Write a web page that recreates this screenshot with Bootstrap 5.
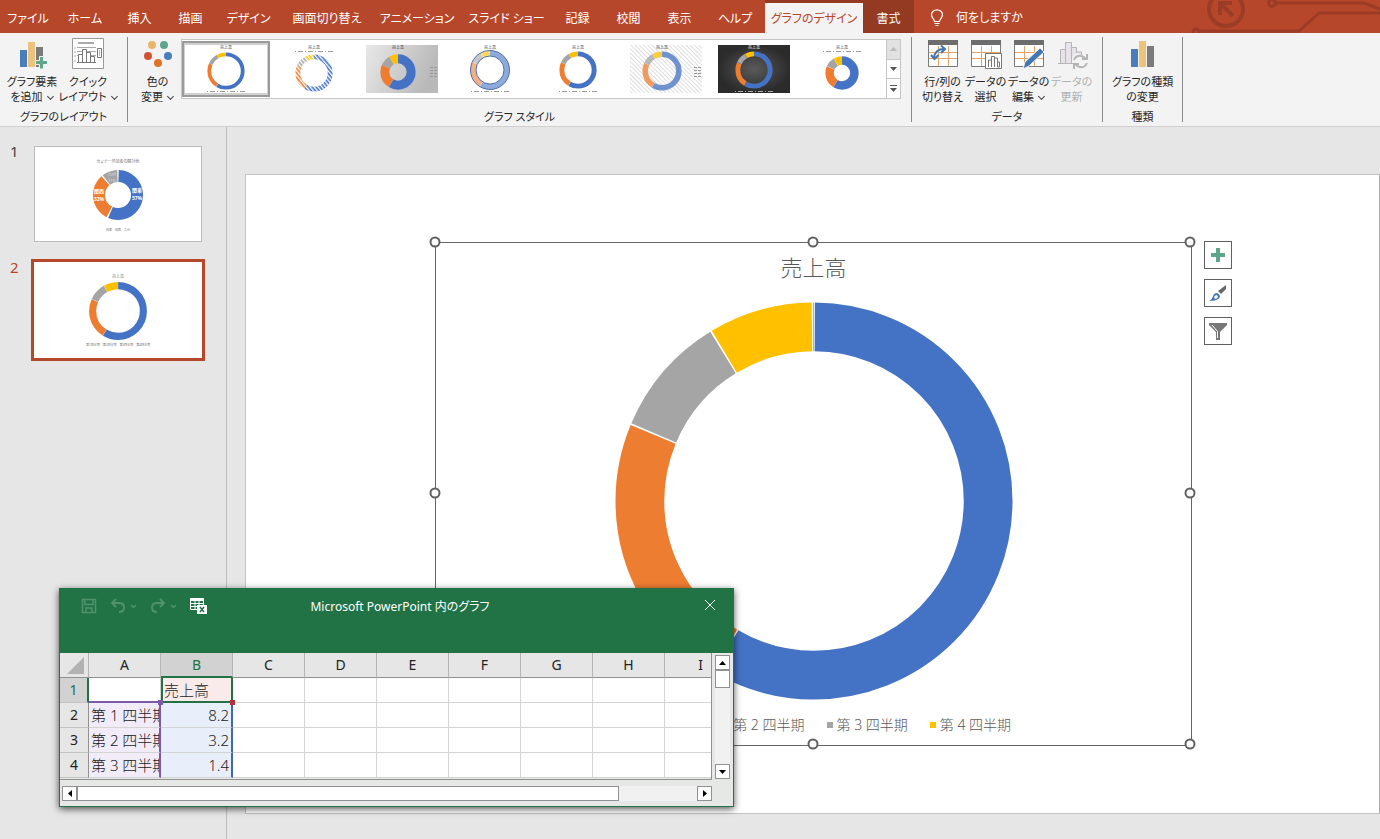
<!DOCTYPE html>
<html lang="ja">
<head>
<meta charset="utf-8">
<meta name="viewport" content="width=device-width, initial-scale=1">
<title>グラフのデザイン</title>
<link href="https://cdn.jsdelivr.net/npm/bootstrap@5.3.0/dist/css/bootstrap.min.css" rel="stylesheet">
<style>
:root{--brand:#b7472a;--excel:#217346;--ui:#f3f3f3;--canvas:#e6e6e6;--c1:#4472c4;--c2:#ed7d31;--c3:#a5a5a5;--c4:#ffc000}
body{font-family:"Noto Sans","Noto Sans CJK JP",sans-serif;font-size:12px;line-height:15px;font-feature-settings:"palt";background:var(--canvas);color:#262626;overflow:hidden}
button{font:inherit;font-feature-settings:inherit;color:inherit}
svg{display:block;flex:none}

/* tab strip */
.tabbar{background:var(--brand);height:33px;overflow:hidden}
.tabs{display:grid;grid-template-columns:56px 58px 51px 51px 65px 92px 88px 91px 51px 51px 51px 60px 98px 51px}
.tabs .nav-link{color:#fff;padding:8px 0 7px;text-align:center;white-space:nowrap;border-radius:0;margin-top:3px;line-height:15px}
.tabs .nav-link.active{background:var(--ui);color:var(--brand)}
.tabs .ctx{background:#943a22;margin-top:0;padding-top:11px}
.tabs .ctxwrap{background:#943a22}
.tell{color:#fff;background:none;border:0;padding:2px 0 0 16px}

/* ribbon */
.ribbon{background:var(--ui);height:94px;border-bottom:1px solid #d2d0ce;padding-top:4px}
.group{border-right:1px solid #8a8a8a;height:85px}
.g-layout{width:128px}
.g-style{width:784px}
.g-data{width:191px}
.g-type{width:80px}
.group-name{font-size:11px;line-height:10px}
.rb{background:none;border:0;padding:0;width:43px;white-space:nowrap;display:flex;flex-direction:column;align-items:center;font-size:11px}
.rb svg.ico{margin:1px 0 5px}
.rb.wide{width:56px}
.rb:disabled{color:#b1b1b1}
.chev{display:inline-block;width:5px;height:5px;border:solid #444;border-width:0 1px 1px 0;rotate:45deg;margin:0 1px 2px 5px}
.gallery{border:1px solid #c6c6c6;background:#fff;height:60px;margin:2px 10px 0 auto}
.sty{width:88px;padding:0;border:0;background:none;display:flex;align-items:center;justify-content:center}
.sty.sel{background:#d0d0ce;outline:2px solid #9a9a9a;outline-offset:-2px;margin:1px 0}
.gscroll{width:14px;border-left:1px solid #c6c6c6;display:flex;flex-direction:column}
.gscroll button{flex:1;width:100%;padding:0;border:0;border-bottom:1px solid #c6c6c6;background:#fff;display:flex;align-items:center;justify-content:center}
.gscroll button:first-child{background:#e1e1e1}
.gscroll button:last-child{border:0}

/* doughnut segments share one drawing; radius and thickness come from the user */
.seg{fill:none;r:var(--r,87.5px);stroke-width:var(--w,24.5px)}

/* panes */
.thumbs{width:227px;border-right:1px solid #bdbdbd;padding:19px 0 0 10px}
.num{width:24px;font-size:15px;line-height:10px;color:#444}
.num.cur-num{color:var(--brand)}
.tslide{width:168px;height:96px;background:#fff;border:1px solid #bdbdbd;padding:0}
.tslide.on{border:0;outline:3px solid var(--brand)}
.stage{padding:47px 0 0 18px}
.slide{background:#fff;border:1px solid #c3c3c3;border-right-color:#ababab;height:640px;padding:66px 147px 0 189px}
.frame{border:1px solid #666;height:504px;padding-top:10px;margin-top:1px}
.ctitle{font-size:22px;line-height:28px;color:#595959;font-weight:300}
.plot{margin:21px auto 15px}
.leg{font-size:14px;line-height:20px;color:#595959;font-weight:300;gap:22px;padding-left:4px}
.leg i{width:6px;height:6px;background:var(--k)}
.dot{position:absolute;width:11px;height:11px;border:2px solid #606060;border-radius:50%;background:#fff;translate:calc(-50% - 1px) calc(-50% - 1px)}
.cbtn{width:28px;height:28px;border:1px solid #606060;background:#fff;padding:0;display:flex;align-items:center;justify-content:center}

/* data window */
.sheetwin{position:absolute;left:59px;top:588px;width:675px;border:1px solid var(--excel);background:#e6e8e6;box-shadow:0 2px 7px #000a}
.wtitle{background:var(--excel);color:#fff;height:64px;padding:8px 14px 0 21px;display:grid;grid-template-columns:1fr auto 1fr;align-items:start}
.wtitle button{background:none;border:0;padding:0}
.wname{padding-top:2px}
.qat{gap:13px}
.qat button:not(:last-child){opacity:.8}
.grid-area{width:652px;height:127px;overflow:hidden;border-right:1px solid #919191;border-bottom:1px solid #919191}
.sheet{table-layout:fixed;width:677px;border-collapse:separate;border-spacing:0;font-size:15px;line-height:20px;font-feature-settings:normal;background:#fff;color:#222}
.sheet th{font-weight:400;text-align:center;padding:0;background:#e6e6e6;border-right:1px solid #b5b5b5;font-size:14px}
.sheet thead th{height:25px;border-bottom:1px solid #919191}
.sheet tbody th{border-bottom:1px solid #c3c3c3;border-right-color:#919191}
.sheet td{height:25px;padding:0 2px;border-right:1px solid #d4d4d4;border-bottom:1px solid #d4d4d4;white-space:nowrap;overflow:hidden;font-weight:300}
.sheet .hl{background:#d2d2d2;color:var(--excel)}
.sheet thead .hl{border-bottom:2px solid var(--excel)}
.sheet tbody .hl{border-right:2px solid var(--excel)}
.sheet .cat{background:#f2ecf8;border-right:2px solid #7b5aa6}
.sheet .val{background:#e8eefa;border-right:2px solid #3c67bd;text-align:right}
.sheet .cur{background:#fbeaea;border:2px solid var(--excel);border-top:0;padding:0 1px}
.sheet .top1{border-bottom:2px solid #7b5aa6}
.grip{position:absolute;width:5px;height:5px}
.grip.g1{left:98px;top:47px;background:#7b5aa6}
.grip.g2{left:170px;top:47px;background:#b5303c}
.vbar{background:#f1f1f1;margin:2px 0 1px 3px}
.hbar{background:#f1f1f1;margin:6px 21px 5px 2px}
.sb{width:15px;height:15px;border:1px solid #919191;background:#fff;padding:0;display:flex;align-items:center;justify-content:center}
.knob{border:1px solid #919191;background:#fff}
.vbar .knob{height:18px}
.hbar .knob{width:542px}
</style>
</head>
<body class="vh-100 d-flex flex-column position-relative">

<svg width="0" height="0" class="position-absolute">
  <symbol id="ring" viewBox="-100 -100 200 200">
    <g transform="rotate(-90)">
      <circle class="seg" pathLength="1400" stroke="var(--c1)" stroke-dasharray="818 582" stroke-dashoffset="-1"/>
      <circle class="seg" pathLength="1400" stroke="var(--c2)" stroke-dasharray="318 1082" stroke-dashoffset="-821"/>
      <circle class="seg" pathLength="1400" stroke="var(--c3)" stroke-dasharray="138 1262" stroke-dashoffset="-1141"/>
      <circle class="seg" pathLength="1400" stroke="var(--c4)" stroke-dasharray="118 1282" stroke-dashoffset="-1281"/>
    </g>
  </symbol>
  <symbol id="tbl" viewBox="0 0 30 28">
    <path fill="#fff" stroke="#7a7a7a" d="M.5 1.500h29v25H.5z"/>
    <path stroke="#e3a36a" d="M1 12.500h28M1 18.500h28M10.500 6v20M20.500 6v20"/>
    <path fill="#6d6d6d" d="M0 0h30v5H0z"/>
  </symbol>
  <symbol id="bars" viewBox="0 0 24 28">
    <path fill="#4a7ebb" d="M0 9h7v18H0z"/><path fill="#ecc27d" d="M8 1h7v26H8z"/><path fill="#7b7b7b" d="M16 6h7v21h-7z"/>
  </symbol>
</svg>

<header class="tabbar d-flex">
  <ul class="nav tabs flex-shrink-0">
    <li><a class="nav-link" href="#">ファイル</a></li>
    <li><a class="nav-link" href="#">ホーム</a></li>
    <li><a class="nav-link" href="#">挿入</a></li>
    <li><a class="nav-link" href="#">描画</a></li>
    <li><a class="nav-link" href="#">デザイン</a></li>
    <li><a class="nav-link" href="#">画面切り替え</a></li>
    <li><a class="nav-link" href="#">アニメーション</a></li>
    <li><a class="nav-link" href="#">スライド ショー</a></li>
    <li><a class="nav-link" href="#">記録</a></li>
    <li><a class="nav-link" href="#">校閲</a></li>
    <li><a class="nav-link" href="#">表示</a></li>
    <li><a class="nav-link" href="#">ヘルプ</a></li>
    <li class="ctxwrap"><a class="nav-link active" href="#">グラフのデザイン</a></li>
    <li><a class="nav-link ctx" href="#">書式</a></li>
  </ul>
  <button class="tell d-flex align-items-center" type="button">
    <svg width="14" height="18" viewBox="0 0 14 18" fill="none" stroke="#fff" stroke-width="1.200"><path d="M4.500 12.500C4.500 10 1.500 9 1.500 5.800a5.500 5 0 0 1 11 0C12.500 9 9.500 10 9.500 12.500zM4.500 14.500h5M5.500 16.500h3"/></svg>
    <span class="ms-2 ps-1">何をしますか</span>
  </button>
  <svg class="ms-auto" width="190" height="33" viewBox="0 0 190 33" fill="none" stroke="#9b3d26" stroke-width="3">
    <circle cx="36" cy="9" r="17" stroke-width="4"/><path stroke-width="4" d="M43 16 31 4M30 15V3h12"/>
    <circle cx="82" cy="3" r="3.500"/><path d="M86 3h88l16 6"/><circle cx="6" cy="32" r="3"/><path d="M10 31h99l20-18h61"/>
  </svg>
</header>

<section class="ribbon d-flex">
  <div class="group g-layout d-flex flex-column justify-content-between">
    <div class="d-flex ps-1">
      <button class="rb wide" type="button">
        <svg class="ico" width="32" height="31" viewBox="0 0 32 31"><path fill="#4a7ebb" d="M4 12h7v17H4z"/><path fill="#ecc27d" d="M12 4h7v25h-7z"/><path fill="#7b7b7b" d="M20 9h7v20h-7z"/><path fill="#5fa58c" stroke="#f3f3f3" d="M23.500 18.500h4v4h4v4h-4v4.500h-4v-4.500h-4v-4h4z"/></svg>
        <span>グラフ要素</span><span>を追加<i class="chev"></i></span>
      </button>
      <button class="rb wide" type="button">
        <svg class="ico" width="32" height="31" viewBox="0 0 32 31" fill="none" stroke="#777"><path fill="#fff" stroke="#999" d="M.5.500h31v30H.5z"/><path stroke="#aaa" stroke-width="2" d="M6 5h16"/><path stroke="#aaa" d="M5 9.500h19M5 13.500h19M5 17.500h19M2 10h2M2 14h2M2 18h2M2 23h2"/><path fill="#fff" d="M6.500 24.500v-8h4v8zm4 0v-13h4v13zm4 0v-10h4v10zm4 0v-6h4v6z"/><path d="M5 24.500h19M25.500 10.500h4v9h-4zM27 13h1M27 15h1M27 17h1"/></svg>
        <span>クイック</span><span>レイアウト<i class="chev"></i></span>
      </button>
    </div>
    <div class="group-name text-center">グラフのレイアウト</div>
  </div>

  <div class="group g-style d-flex flex-column justify-content-between flex-shrink-0">
    <div class="d-flex ps-2">
      <button class="rb" type="button">
        <svg class="ico" width="30" height="31" viewBox="0 0 30 31"><circle cx="9" cy="7" r="4" fill="#e8b66b"/><circle cx="21" cy="7" r="4" fill="#5fa58c"/><circle cx="5" cy="18" r="4" fill="#d35230"/><circle cx="25" cy="18" r="4" fill="#4a7ebb"/><circle cx="15" cy="25" r="4" fill="#dd7327"/></svg>
        <span>色の</span><span>変更<i class="chev"></i></span>
      </button>
      <div class="gallery d-flex" id="gallery">
        <div class="gscroll order-last">
          <button type="button" aria-label="上"><svg width="7" height="4"><path fill="#bbb" d="M0 4h7L3.500 0z"/></svg></button>
          <button type="button" aria-label="下"><svg width="7" height="4"><path fill="#555" d="M0 0h7L3.500 4z"/></svg></button>
          <button type="button" aria-label="その他"><svg width="7" height="7"><path fill="#555" d="M0 0h7v1H0zM0 3h7L3.500 7z"/></svg></button>
        </div>
      </div>
    </div>
    <div class="group-name text-center">グラフ スタイル</div>
  </div>

  <div class="group g-data d-flex flex-column justify-content-between align-items-center">
    <div class="d-flex">
      <button class="rb" type="button">
        <svg class="ico" width="32" height="31" viewBox="0 0 32 31"><use href="#tbl" x="1" y="2" width="30" height="28"/><path fill="none" stroke="#3f78b5" stroke-width="2" d="M7 20Q8 11 17 11M4 17l3.500 4 4-4M14 7.500l4 3.500-4 4"/></svg>
        <span>行/列の</span><span>切り替え</span>
      </button>
      <button class="rb" type="button">
        <svg class="ico" width="32" height="31" viewBox="0 0 32 31"><use href="#tbl" x="1" y="2" width="30" height="28"/><path fill="#fff" stroke="#777" d="M15.500 15.500h16v15h-16zM18.500 29v-7h3v7m0 0V18.500h3V29m0 0v-9h3v9m0 0v-5h2v5z"/></svg>
        <span>データの</span><span>選択</span>
      </button>
      <button class="rb" type="button">
        <svg class="ico" width="32" height="31" viewBox="0 0 32 31"><use href="#tbl" x="1" y="2" width="30" height="28"/><path fill="#3f78b5" stroke="#f3f3f3" d="M10 31l2-7 15-14 4 4-15 14z"/></svg>
        <span>データの</span><span>編集<i class="chev"></i></span>
      </button>
      <button class="rb" type="button" disabled>
        <svg class="ico" width="32" height="31" viewBox="0 0 32 31" fill="#e8e3ea" stroke="#b5b5b5"><path d="M2 25.500h16M4.500 25V11.500h5V25M9.500 25V4.500h6V25M15.500 20V9.500h5V15M20.500 15v-1h5v3"/><g fill="none" stroke-width="2"><path d="M18 22q2-5 7-4 3 .5 5 3M31 16v5h-5M31 25q-2 5-7 4-3-.5-5-3M18 31v-5h5"/></g></svg>
        <span>データの</span><span>更新</span>
      </button>
    </div>
    <div class="group-name">データ</div>
  </div>

  <div class="group g-type d-flex flex-column justify-content-between align-items-center">
    <button class="rb wide" type="button">
      <svg class="ico" width="24" height="31" viewBox="0 0 24 31"><use href="#bars" y="2" width="24" height="28"/></svg>
      <span>グラフの種類</span><span>の変更</span>
    </button>
    <div class="group-name">種類</div>
  </div>
</section>

<main class="d-flex flex-grow-1">
  <nav class="thumbs flex-shrink-0 d-flex flex-column gap-3">
    <div class="d-flex">
      <span class="num">1</span>
      <button class="tslide" type="button" aria-label="スライド 1">
        <svg width="166" height="94" viewBox="0 0 166 94" text-anchor="middle" font-size="4" fill="#777">
          <text x="83" y="16">セミナー参加者の関対他</text>
          <g transform="translate(83 48) rotate(-90)" fill="none" stroke-width="12"><circle r="19" pathLength="100" stroke="#4472c4" stroke-dasharray="56 44" stroke-dashoffset="-.5"/><circle r="19" pathLength="100" stroke="#ed7d31" stroke-dasharray="31 69" stroke-dashoffset="-57.500"/><circle r="19" pathLength="100" stroke="#a5a5a5" stroke-dasharray="10 90" stroke-dashoffset="-89.500"/></g>
          <g fill="#fff" font-weight="700" font-size="5"><text x="102" y="45">関東</text><text x="102" y="53">57%</text><text x="64" y="46">関西</text><text x="64" y="54">32%</text></g>
          <g fill="#ddd"><text x="77" y="29">九州</text><text x="77" y="35">11%</text></g>
          <text x="83" y="84" font-size="3">関東　関西　九州</text>
        </svg>
      </button>
    </div>
    <div class="d-flex pt-1">
      <span class="num cur-num">2</span>
      <button class="tslide on" type="button" aria-label="スライド 2">
        <svg width="168" height="96" viewBox="0 0 168 96" text-anchor="middle" font-size="4" fill="#777">
          <text x="84" y="16">売上高</text>
          <use href="#ring" x="55" y="20" width="58" height="58"/>
          <text x="84" y="84" font-size="3">第1四半期　第2四半期　第3四半期　第4四半期</text>
        </svg>
      </button>
    </div>
  </nav>

  <div class="stage flex-grow-1">
    <div class="slide d-flex">
      <section class="frame position-relative flex-grow-1 text-center">
        <div class="ctitle">売上高</div>
        <svg class="plot" width="398" height="398"><use href="#ring" width="398" height="398"/></svg>
        <div class="leg d-flex justify-content-center">
          <span class="d-flex align-items-center gap-1"><i style="--k:var(--c1)"></i>第 1 四半期</span>
          <span class="d-flex align-items-center gap-1"><i style="--k:var(--c2)"></i>第 2 四半期</span>
          <span class="d-flex align-items-center gap-1"><i style="--k:var(--c3)"></i>第 3 四半期</span>
          <span class="d-flex align-items-center gap-1"><i style="--k:var(--c4)"></i>第 4 四半期</span>
        </div>
        <span class="dot top-0 start-0"></span><span class="dot top-0 start-50"></span><span class="dot top-0 start-100"></span>
        <span class="dot top-50 start-0"></span><span class="dot top-50 start-100"></span>
        <span class="dot top-100 start-0"></span><span class="dot top-100 start-50"></span><span class="dot top-100 start-100"></span>
      </section>
      <div class="d-flex flex-column ms-2 ps-1" style="gap:10px">
        <button class="cbtn" type="button" aria-label="グラフ要素"><svg width="14" height="14"><path fill="#5fa58c" d="M5 0h4v5h5v4H9v5H5V9H0V5h5z"/></svg></button>
        <button class="cbtn" type="button" aria-label="グラフ スタイル"><svg width="20" height="20" viewBox="0 0 20 20"><path fill="#666" d="M18 2v4l-5 5-3-3z"/><path fill="#3f78b5" d="M1 18q3-1 4-5 1-3 4-3 3 1 3 4-2 4-11 4z"/><path fill="#fff" d="M6 14q1-2 3-2l1 2q-1 2-3 2z"/></svg></button>
        <button class="cbtn" type="button" aria-label="グラフ フィルター"><svg width="18" height="17" viewBox="0 0 18 17"><path fill="#777" d="M0 0h18v2l-7 7v8H7V9L0 2z"/><path fill="none" stroke="#fff" d="M3 2l5.500 6.500V15"/></svg></button>
      </div>
    </div>
  </div>
</main>

<section class="sheetwin">
  <div class="wtitle">
    <div class="qat d-flex align-items-center">
      <button type="button" aria-label="保存"><svg width="16" height="18" viewBox="0 0 16 18" fill="none" stroke="#5c9a76" stroke-width="1.500"><path d="M1.500 2.500h13v13h-13zM4 2.500v5h8v-5M5 15v-4h6v4"/></svg></button>
      <button type="button" class="d-flex align-items-center gap-1" aria-label="元に戻す"><svg width="16" height="16" viewBox="0 0 16 16" fill="none" stroke="#5c9a76" stroke-width="2"><path d="M6 1 2 5l4 4M2 5h7q5 0 5 4.500T9 14"/></svg><svg width="7" height="5" fill="none" stroke="#5c9a76" stroke-width="1.500"><path d="M1 1l2.500 2.500L6 1"/></svg></button>
      <button type="button" class="d-flex align-items-center gap-1" aria-label="やり直し"><svg width="16" height="16" viewBox="0 0 16 16" fill="none" stroke="#5c9a76" stroke-width="2"><path d="M10 1l4 4-4 4M14 5H7Q2 5 2 9.500T7 14"/></svg><svg width="7" height="5" fill="none" stroke="#5c9a76" stroke-width="1.500"><path d="M1 1l2.500 2.500L6 1"/></svg></button>
      <button type="button" aria-label="Excel で編集"><svg width="17" height="18" viewBox="0 0 17 18"><path fill="none" stroke="#fff" d="M.5 1.500h13v11H.5zM1 6.500h12M1 9.500h12M5 4v8M9 4v8"/><path fill="#fff" d="M0 1h14v3H0zM7 8h10v9H7z"/><path stroke="#217346" stroke-width="1.500" d="M10 10l4 5M14 10l-4 5"/></svg></button>
    </div>
    <div class="wname">Microsoft PowerPoint 内のグラフ</div>
    <button type="button" aria-label="閉じる" class="ms-auto"><svg width="18" height="16" fill="none" stroke="#fff"><path d="M4 3l10 10M14 3L4 13"/></svg></button>
  </div>
  <div class="d-flex">
    <div class="grid-area position-relative">
      <table class="sheet">
        <colgroup><col style="width:29px"><col span="9" style="width:72px"></colgroup>
        <thead><tr><th><svg class="ms-auto me-1" width="17" height="17"><path fill="#b2b2b2" d="M17 0v17H0z"/></svg></th><th>A</th><th class="hl">B</th><th>C</th><th>D</th><th>E</th><th>F</th><th>G</th><th>H</th><th>I</th></tr></thead>
        <tbody>
          <tr><th class="hl">1</th><td class="top1"></td><td class="cur">売上高</td><td></td><td></td><td></td><td></td><td></td><td></td><td></td></tr>
          <tr><th>2</th><td class="cat">第 1 四半期</td><td class="val">8.2</td><td></td><td></td><td></td><td></td><td></td><td></td><td></td></tr>
          <tr><th>3</th><td class="cat">第 2 四半期</td><td class="val">3.2</td><td></td><td></td><td></td><td></td><td></td><td></td><td></td></tr>
          <tr><th>4</th><td class="cat">第 3 四半期</td><td class="val">1.4</td><td></td><td></td><td></td><td></td><td></td><td></td><td></td></tr>
        </tbody>
      </table>
      <span class="grip g1"></span><span class="grip g2"></span>
    </div>
    <div class="vbar d-flex flex-column">
      <button class="sb" type="button" aria-label="上へ"><svg width="7" height="4"><path d="M0 4h7L3.500 0z"/></svg></button>
      <div class="knob"></div>
      <button class="sb mt-auto" type="button" aria-label="下へ"><svg width="7" height="4"><path d="M0 0h7L3.500 4z"/></svg></button>
    </div>
  </div>
  <div class="hbar d-flex">
    <button class="sb" type="button" aria-label="左へ"><svg width="4" height="7"><path d="M4 0v7L0 3.500z"/></svg></button>
    <div class="knob"></div>
    <button class="sb ms-auto" type="button" aria-label="右へ"><svg width="4" height="7"><path d="M0 0v7l4-3.500z"/></svg></button>
  </div>
</section>

<script src="https://cdn.jsdelivr.net/npm/bootstrap@5.3.0/dist/js/bootstrap.bundle.min.js"></script>
<script>
// gallery entries: ring size and centre, ring thickness, background, title side, legend place
const styles=[
 {d:38,cx:41,cy:26,w:20,leg:'b'},
 {d:38,cx:36,cy:28,w:26,leg:'t',hatch:1},
 {d:36,cx:32,cy:27,w:50,leg:'r',bg:'url(#gsilver)'},
 {d:40,cx:36,cy:25,w:28,leg:'b',op:.6,line:1},
 {d:38,cx:36,cy:25,w:26,leg:'b'},
 {d:40,cx:32,cy:26,w:28,leg:'r',bg:'url(#stripe)',op:.75},
 {d:38,cx:36,cy:25,w:26,leg:'b',bg:'url(#gdark)',dark:1},
 {d:34,cx:36,cy:28,w:50,leg:'t'}];
const defs=`<defs><linearGradient id="gsilver" x2="1" y2=".3"><stop stop-color="#e8e8e8"/><stop offset="1" stop-color="#b9b9b9"/></linearGradient>
<radialGradient id="gdark"><stop stop-color="#5a5a5a"/><stop offset="1" stop-color="#2b2b2b"/></radialGradient>
<pattern id="stripe" width="3" height="3" patternUnits="userSpaceOnUse" patternTransform="rotate(-45)"><path fill="#fff" d="M0 0h3v3H0z"/><path fill="#ddd" d="M0 0h1v3H0z"/></pattern>
<pattern id="hatchgap" width="3" height="3" patternUnits="userSpaceOnUse" patternTransform="rotate(-40)"><path fill="#fff" d="M0 0h1.400v3H0z"/></pattern></defs>`;
const gallery=document.getElementById('gallery');
styles.forEach((s,i)=>{
  const W=i?72:82,ink=s.dark?'#aaa':'#999';
  const x=s.cx-s.d/2,y=s.cy-s.d/2;
  const line=s.leg==='r'?`<path stroke="${ink}" stroke-dasharray="3 1" d="M64 22.500h7M64 25.500h7M64 28.500h7M64 31.500h7"/>`
    :`<path stroke="${ink}" stroke-dasharray="1 2 5 2" d="M${s.cx-19} ${s.leg==='t'?6.5:46.5}h40"/>`;
  gallery.insertAdjacentHTML('beforeend',`<button type="button" class="sty${i?'':' sel'}" aria-label="スタイル ${i+1}"><svg width="${W}" height="48" style="--w:${s.w}px;--r:${98-s.w/2}px">${i?'':defs}
   <path fill="${s.bg||'#fff'}" d="M0 0h${W}v48H0z"/><text x="${s.cx}" y="4" font-size="4" text-anchor="middle" fill="${s.dark?'#fff':'#333'}">売上高</text>
   <use href="#ring" x="${x}" y="${y}" width="${s.d}" height="${s.d}" opacity="${s.op||1}"/>
   ${s.hatch?`<circle cx="${s.cx}" cy="${s.cy}" r="20" fill="url(#hatchgap)"/>`:''}
   ${s.line?`<circle cx="${s.cx}" cy="${s.cy}" r="19.500" fill="none" stroke="#4f6fb0"/><circle cx="${s.cx}" cy="${s.cy}" r="14" fill="none" stroke="#4f6fb0"/>`:''}${line}</svg></button>`);
});
</script>
</body>
</html>
